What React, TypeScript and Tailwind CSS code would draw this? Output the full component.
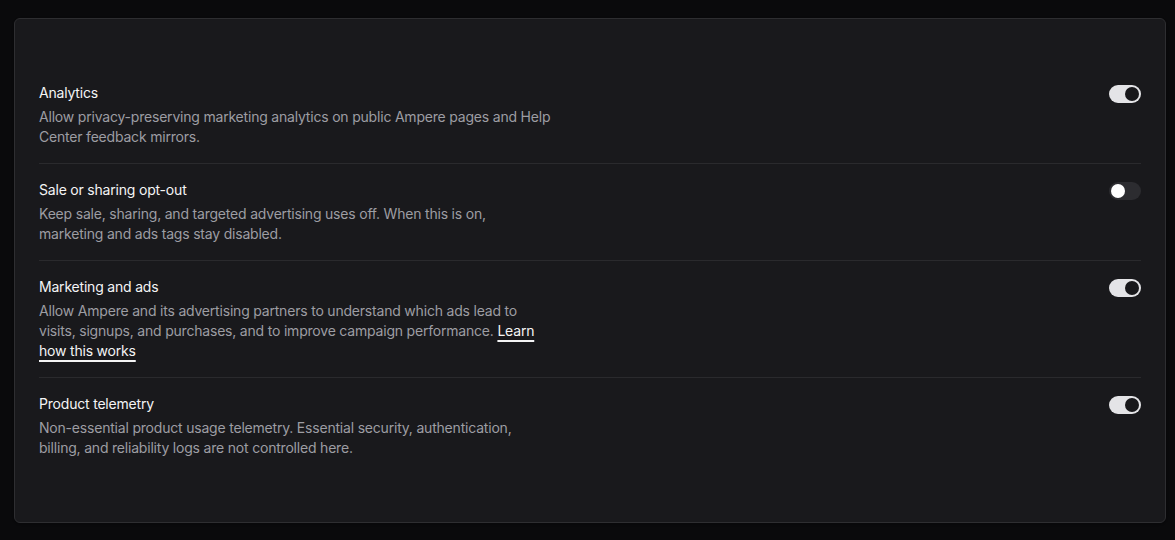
import React, { useState } from "react";

type Pref = {
  id: string;
  title: string;
  body: React.ReactNode;
  on: boolean;
};

const prefs: Pref[] = [
  {
    id: "analytics",
    title: "Analytics",
    body: "Allow privacy-preserving marketing analytics on public Ampere pages and Help Center feedback mirrors.",
    on: true,
  },
  {
    id: "optout",
    title: "Sale or sharing opt-out",
    body: "Keep sale, sharing, and targeted advertising uses off. When this is on, marketing and ads tags stay disabled.",
    on: false,
  },
  {
    id: "ads",
    title: "Marketing and ads",
    body: (
      <>
        Allow Ampere and its advertising partners to understand which ads lead to visits, signups, and purchases, and to
        improve campaign performance.{" "}
        <a href="#" className="text-zinc-100 underline decoration-[1.5px] underline-offset-[4px]">
          Learn how this works
        </a>
      </>
    ),
    on: true,
  },
  {
    id: "telemetry",
    title: "Product telemetry",
    body: "Non-essential product usage telemetry. Essential security, authentication, billing, and reliability logs are not controlled here.",
    on: true,
  },
];

function Toggle({ checked, onChange }: { checked: boolean; onChange: () => void }) {
  return (
    <button
      type="button"
      role="switch"
      aria-checked={checked}
      onClick={onChange}
      className={
        "mt-0.5 flex h-[18px] w-8 shrink-0 items-center rounded-full p-[2px] transition-colors " +
        (checked ? "justify-end bg-[#e4e4e7]" : "justify-start bg-[#2c2c30]")
      }
    >
      <span className={"h-[14px] w-[14px] rounded-full " + (checked ? "bg-[#18181b]" : "bg-white")} />
    </button>
  );
}

export default function App() {
  const [state, setState] = useState<Record<string, boolean>>(
    Object.fromEntries(prefs.map((p) => [p.id, p.on]))
  );

  return (
    <div className="min-h-screen bg-[#0a0a0c] pl-[14px] pt-[18px] font-['Inter',sans-serif] tracking-[-0.2px] antialiased">
      <div className="w-[1152px] rounded-md border border-[#2e2e31] bg-[#19191c] px-6 py-12 shadow-sm">
        <ul className="divide-y divide-[#2a2a2d]">
          {prefs.map((p) => (
            <li key={p.id} className="flex items-start justify-between gap-6 py-4">
              <div className="max-w-[513px]">
                <div className="text-sm leading-5 text-zinc-100">{p.title}</div>
                <p className="mt-1 text-sm leading-5 text-[#9d9da3]">{p.body}</p>
              </div>
              <Toggle
                checked={state[p.id]}
                onChange={() => setState((s) => ({ ...s, [p.id]: !s[p.id] }))}
              />
            </li>
          ))}
        </ul>
      </div>
    </div>
  );
}
